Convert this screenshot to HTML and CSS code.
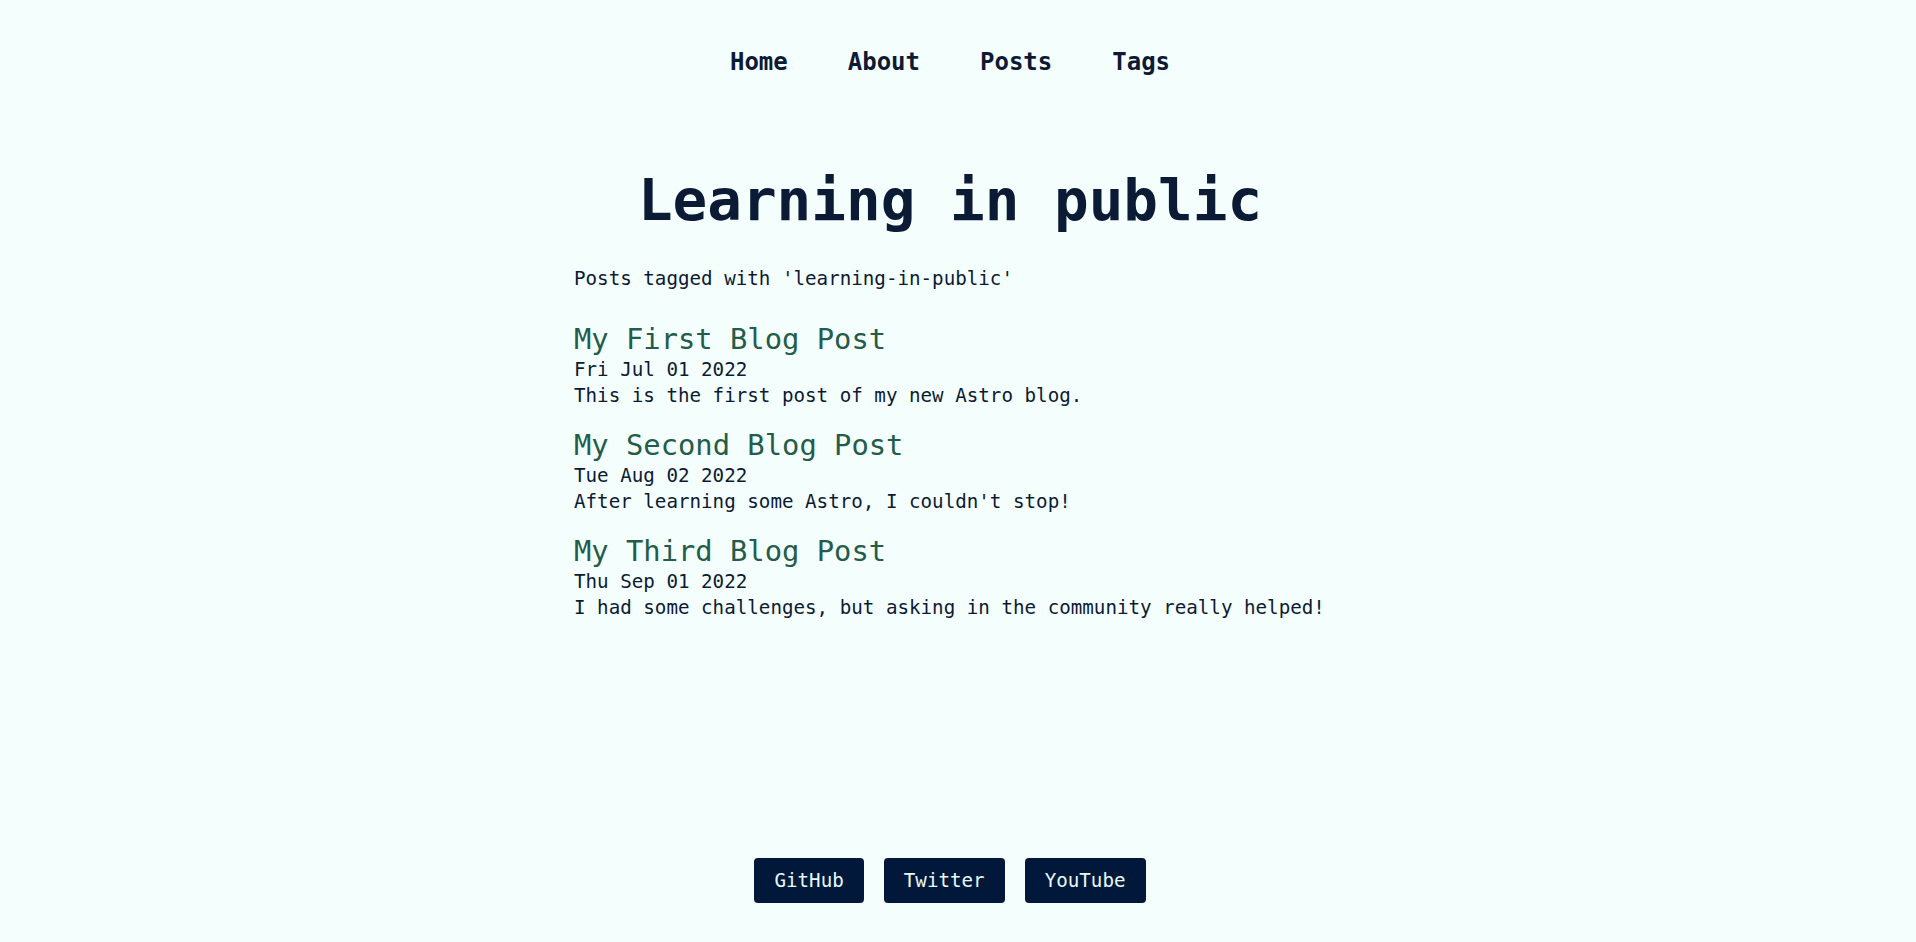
FILE: index.html
```html
<!DOCTYPE html>
<html lang="en">
<head>
<meta charset="utf-8">
<title>Learning in public</title>
<link rel="stylesheet" href="styles.css">
</head>
<body>
<div class="page">
  <nav class="nav">
    <a href="#" class="nav-link">Home</a>
    <a href="#" class="nav-link">About</a>
    <a href="#" class="nav-link">Posts</a>
    <a href="#" class="nav-link">Tags</a>
  </nav>
  <h1 class="title">Learning in public</h1>
  <main class="content">
    <p class="intro">Posts tagged with 'learning-in-public'</p>
    <ul class="posts">
      <li class="post">
        <a href="#" class="post-title">My First Blog Post</a>
        <div class="post-date">Fri Jul 01 2022</div>
        <div class="post-desc">This is the first post of my new Astro blog.</div>
      </li>
      <li class="post">
        <a href="#" class="post-title">My Second Blog Post</a>
        <div class="post-date">Tue Aug 02 2022</div>
        <div class="post-desc">After learning some Astro, I couldn't stop!</div>
      </li>
      <li class="post">
        <a href="#" class="post-title">My Third Blog Post</a>
        <div class="post-date">Thu Sep 01 2022</div>
        <div class="post-desc">I had some challenges, but asking in the community really helped!</div>
      </li>
    </ul>
  </main>
  <footer class="footer">
    <a href="#" class="social">GitHub</a>
    <a href="#" class="social">Twitter</a>
    <a href="#" class="social">YouTube</a>
  </footer>
</div>
</body>
</html>
```

FILE: styles.css
```css
html, body {
  margin: 0;
  padding: 0;
}

body {
  background: #f4fffd;
  color: #0d1a33;
  font-family: "DejaVu Sans Mono", "Liberation Mono", monospace;
  font-size: 19.2px;
  line-height: 26px;
}

.page {
  width: calc(100% - 16px);
  min-height: 100vh;
  display: flex;
  flex-direction: column;
  align-items: center;
}

.nav {
  display: flex;
  gap: 60px;
  padding-top: 48px;
}

.nav-link {
  font-size: 24px;
  line-height: 28px;
  font-weight: bold;
  color: #0d1a33;
  text-decoration: none;
}

.title {
  margin: 90px 0 0;
  font-size: 57.6px;
  line-height: 1.2;
  font-weight: bold;
  color: #0b1a35;
}

.content {
  width: 752px;
  margin-top: 31px;
}

.intro {
  margin: 0;
}

.posts {
  list-style: none;
  margin: 29px 0 0;
  padding: 0;
  display: flex;
  flex-direction: column;
  gap: 18px;
}

.post {
  display: flex;
  flex-direction: column;
}

.post-title {
  font-size: 28.8px;
  line-height: 36px;
  color: #235c4a;
  text-decoration: none;
}

.footer {
  margin-top: auto;
  padding-bottom: 39px;
  display: flex;
  gap: 20px;
}

.social {
  background: #01183a;
  color: #e6fbf8;
  text-decoration: none;
  padding: 10px 20px;
  line-height: 25px;
  border-radius: 4px;
}
```
